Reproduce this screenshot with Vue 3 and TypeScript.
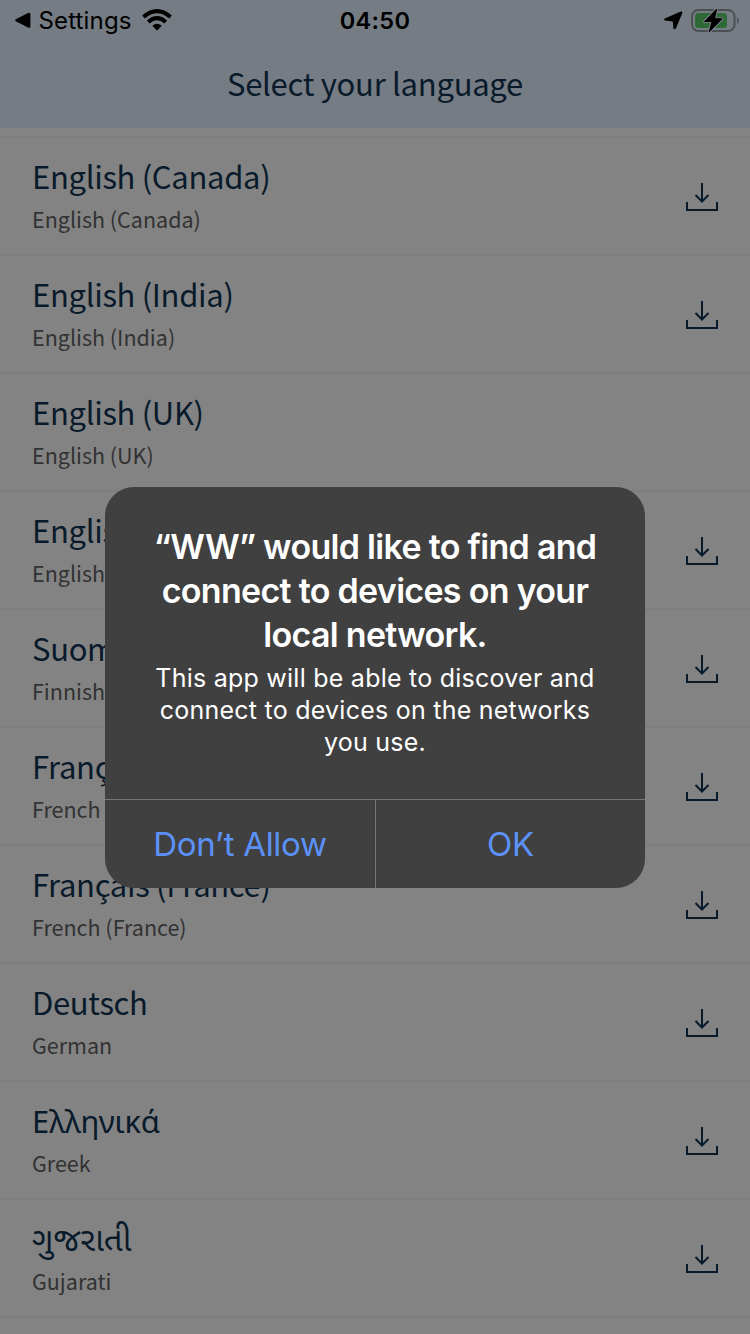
<script setup lang="ts">
interface Language {
  name: string
  label: string
  script?: 'greek' | 'gujarati'
  installed?: boolean
}

const languages: Language[] = [
  { name: 'English (Canada)', label: 'English (Canada)' },
  { name: 'English (India)', label: 'English (India)' },
  { name: 'English (UK)', label: 'English (UK)', installed: true },
  { name: 'English (US)', label: 'English (US)' },
  { name: 'Suomi', label: 'Finnish' },
  { name: 'Français (Canada)', label: 'French (Canada)' },
  { name: 'Français (France)', label: 'French (France)' },
  { name: 'Deutsch', label: 'German' },
  { name: 'Ελληνικά', label: 'Greek', script: 'greek' },
  { name: 'ગુજરાતી', label: 'Gujarati', script: 'gujarati' },
]
</script>

<template>
  <main class="screen">
    <header class="header">
      <div class="status">
        <div class="side">
          <svg class="back" width="16" height="16" viewBox="0 0 16 16"><path d="M.8 7.3Q-.6 8.3 .8 9.3L13.5 15.8Q15.4 16.2 15.4 14.2V2.4Q15.4 .4 13.5.8Z" /></svg>
          <span class="settings">Settings</span>
          <svg class="wifi" width="30" height="22" viewBox="0 0 30 22">
            <g fill="none" stroke="#000" stroke-width="4">
              <path d="M1.5 8Q15-3.8 28.5 8" />
              <path d="M6.2 13Q15 5.4 23.8 13" />
            </g>
            <path d="M10.3 16.7Q15 12.8 19.7 16.7L15.7 21Q15 21.8 14.3 21Z" />
          </svg>
        </div>
        <span class="time">04:50</span>
        <div class="side right">
          <svg width="19" height="19" viewBox="0 0 19 19"><path d="M.8 7.5L16.8.6Q18.8.1 18.2 2.2L12 17.2Q10.5 19 9.4 17.4L8.8 10.4L1 9.6Q-.6 8.6.8 7.5Z" /></svg>
          <svg class="battery" width="48" height="25" viewBox="0 0 48 25">
            <rect x="1" y="2" width="42.5" height="21" rx="6.5" fill="none" stroke="#4b5054" stroke-width="2" />
            <rect x="4" y="5" width="32" height="15" rx="3.5" fill="#2e6a35" />
            <path d="M46 9Q48 10.5 48 12.5T46 16Z" fill="#4b5054" />
            <path d="M25.6 1.2L13.5 13.5H21L18.3 23.8L31 10.8H23.5Z" fill="#000" stroke="#757c83" stroke-width="3" stroke-linejoin="round" paint-order="stroke" />
            <path d="M25.6 1.2L13.5 13.5H21L18.3 23.8L31 10.8H23.5Z" stroke="#000" stroke-width="1" stroke-linejoin="round" />
          </svg>
        </div>
      </div>
      <h1 class="heading">Select your language</h1>
    </header>

    <ul class="list">
      <li v-for="language in languages" :key="language.label" class="row">
        <div>
          <div class="name" :class="language.script">{{ language.name }}</div>
          <div class="label">{{ language.label }}</div>
        </div>
        <svg v-if="!language.installed" class="download" width="32" height="28" viewBox="0 0 32 28">
          <path d="M16 0V18.5M9.5 12L16 18.5L22.5 12M1 19V27H31V19" fill="none" stroke="#091a2b" stroke-width="2" />
        </svg>
      </li>
    </ul>

    <section class="alert" role="alertdialog">
      <div class="copy">
        <h2 class="title">
          <span>“WW” would like to find and</span>
          <span>connect to devices on your</span>
          <span>local network.</span>
        </h2>
        <p class="message">
          <span>This app will be able to discover and</span>
          <span>connect to devices on the networks</span>
          <span>you use.</span>
        </p>
      </div>
      <div class="actions">
        <button type="button" class="deny">Don’t Allow</button>
        <button type="button">OK</button>
      </div>
    </section>
  </main>
</template>

<style>
body {
  margin: 0;
  background: #838383;
}
</style>

<style scoped>
.screen {
  position: relative;
  width: 750px;
  height: 1334px;
  overflow: hidden;
  background: #838383;
  font-family: "Noto Sans CJK SC", "Noto Sans", sans-serif;
}
.header {
  height: 128px;
  background: #757c83;
}
.status {
  display: grid;
  grid-template-columns: 1fr auto 1fr;
  height: 40px;
  align-items: center;
  font-family: Inter, "Liberation Sans", sans-serif;
  font-size: 24px;
  color: #000;
}
.side {
  display: flex;
  align-items: center;
  padding-left: 14.5px;
}
.settings {
  margin: 1px 0 0 8px;
  letter-spacing: 0.15px;
}
.wifi {
  margin-left: 10px;
}
.time {
  font-weight: 600;
  font-size: 23.5px;
  letter-spacing: 0.3px;
}
.right {
  justify-content: flex-end;
  padding: 0 11px 0 0;
}
.battery {
  margin-left: 8px;
}
.heading {
  margin: 0;
  padding-top: 20px;
  line-height: 46px;
  font-size: 31px;
  font-weight: 400;
  letter-spacing: -0.27px;
  text-align: center;
  color: #091a2b;
}
.list {
  margin: 8px 0 0;
  padding: 0;
  list-style: none;
  border-top: 2px solid #7e7e7e;
}
.row {
  box-sizing: border-box;
  display: flex;
  justify-content: space-between;
  height: 118px;
  padding: 17px 32px 0;
  border-bottom: 2px solid #7e7e7e;
}
.name {
  height: 40px;
  line-height: 42px;
  font-size: 31px;
  letter-spacing: -0.32px;
  color: #091a2b;
  white-space: nowrap;
}
.greek {
  line-height: 44px;
  font-family: "Noto Sans", sans-serif;
}
.gujarati {
  line-height: 52px;
  font-family: "Noto Sans Gujarati", "Noto Sans", sans-serif;
  font-size: 33px;
  letter-spacing: -0.1px;
}
.label {
  margin-top: 9px;
  line-height: 30px;
  font-size: 21.5px;
  color: #323232;
}
.download {
  margin-top: 28px;
}
.alert {
  position: absolute;
  top: 487px;
  left: 105px;
  width: 540px;
  height: 401px;
  overflow: hidden;
  border-radius: 29px;
  background: #404040;
  color: #fff;
  font-family: Inter, "Liberation Sans", sans-serif;
  text-align: center;
}
.copy {
  box-sizing: border-box;
  height: 312px;
  padding-top: 38px;
}
.title,
.message {
  margin: 0;
}
.title span,
.message span {
  display: block;
  white-space: nowrap;
}
.title {
  line-height: 44px;
  font-size: 34px;
  font-weight: 600;
  letter-spacing: -0.7px;
}
.message {
  padding-top: 5px;
  line-height: 32px;
  font-size: 25px;
  letter-spacing: 0.24px;
}
.actions {
  display: grid;
  grid-template-columns: 270px 1px 1fr;
  height: 88px;
  border-top: 1px solid #767676;
}
.actions::before {
  content: "";
  grid-column: 2;
  grid-row: 1;
  background: #767676;
}
.actions button {
  grid-column: 3;
  grid-row: 1;
  padding: 0;
  border: 0;
  background: none;
  font-family: inherit;
  font-size: 33px;
  letter-spacing: -0.3px;
  color: #5c92f8;
}
.actions .deny {
  grid-column: 1;
}
</style>
